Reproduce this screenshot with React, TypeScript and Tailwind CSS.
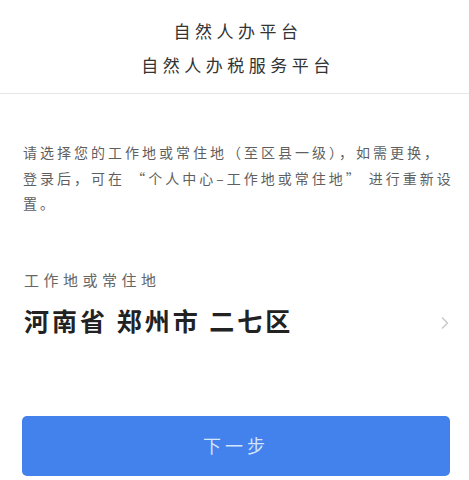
import { ChevronRight } from 'lucide-react';

const cjk = "font-['Noto_Sans_CJK_SC','Noto_Sans',sans-serif]";

export default function App() {
  return (
    <div className={`w-[469px] h-[480px] bg-white overflow-hidden flex flex-col ${cjk}`}>
      <div className="h-[94px] shrink-0 border-b border-[#e6e6e6] flex flex-col items-center pl-[7px] pt-[19px] gap-[10px] text-[17px] leading-[24px] tracking-[4.5px] text-[#333333]">
        <div>自然人办平台</div>
        <div>自然人办税服务平台</div>
      </div>
      <p className="mt-[46px] pl-[23px] pr-[12px] text-[14px] leading-[25.5px] tracking-[3px] text-[#5f5f5f]">
        请选择您的工作地或常住地（至区县一级），如需更换，
        <br />
        登录后，可在 “个人中心–工作地或常住地” 进行重新设置。
      </p>
      <div className="mt-[52px] pl-[24px] pr-[23px] text-[15px] leading-[22px] tracking-[4.5px] text-[#666666]">工作地或常住地</div>
      <div className="mt-[11px] pl-[24px] pr-[14px] flex items-center justify-between">
        <div className="text-[25px] leading-[36px] font-bold tracking-[3px] text-[#222222] whitespace-nowrap">河南省 郑州市 二七区</div>
        <ChevronRight className="w-[20px] h-[20px] text-[#cccccc] mt-[6px]" />
      </div>
      <button className="mt-[78px] ml-[22px] w-[428px] h-[60px] shrink-0 rounded-[5px] bg-[#4381ec] text-[#d3e4fb] text-[18px] tracking-[4px]">下一步</button>
    </div>
  );
}
